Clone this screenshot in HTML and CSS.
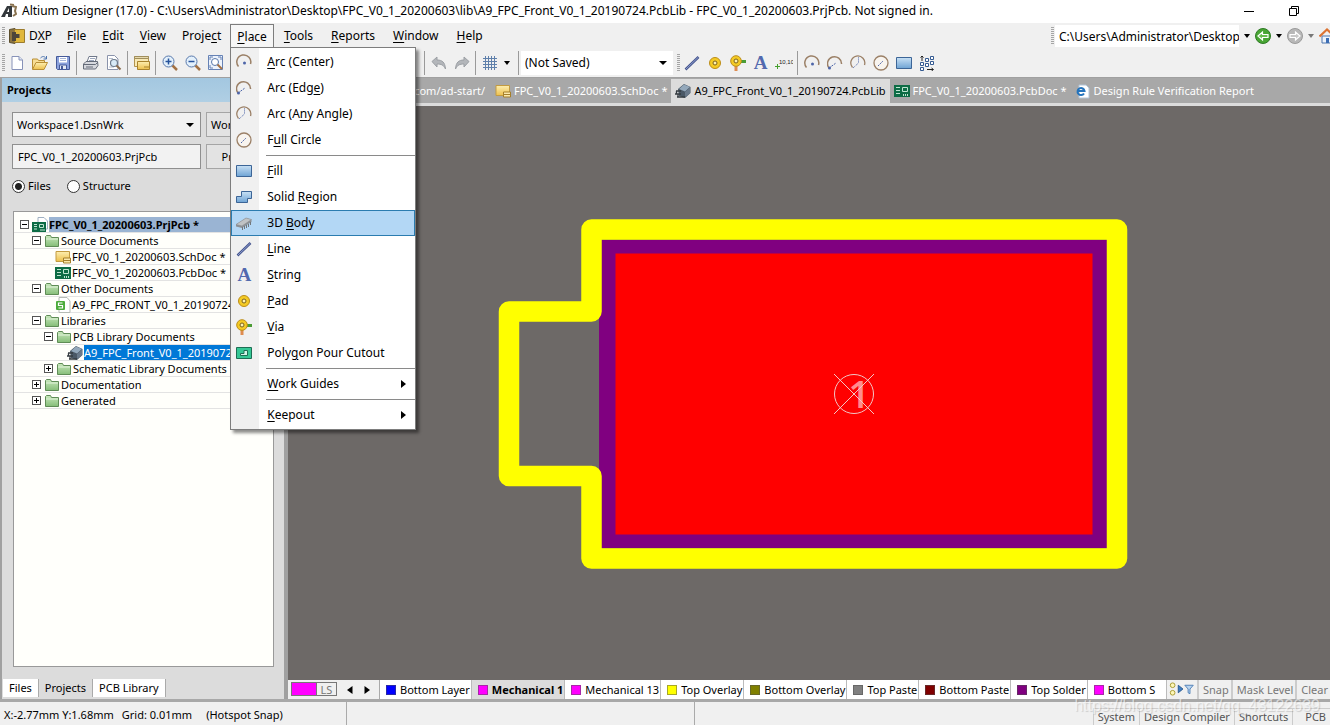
FILE: index.html
```
<!doctype html>
<html lang="en">
<head>
<meta charset="utf-8">
<title>Altium Designer (17.0)</title>
<link rel="stylesheet" href="styles.css">
</head>

<body>

<!-- icon set -->
<svg class="sprite" width="0" height="0">
	<defs>
		<linearGradient id="g-blue" x1="0" y1="0" x2="0" y2="1"><stop offset="0" stop-color="#c9e1f5"/><stop offset="1" stop-color="#6ea3d4"/></linearGradient>
		<linearGradient id="g-yellow" x1="0" y1="0" x2="0" y2="1"><stop offset="0" stop-color="#fdeeb0"/><stop offset="1" stop-color="#edc04c"/></linearGradient>
		<linearGradient id="g-green" x1="0" y1="0" x2="0" y2="1"><stop offset="0" stop-color="#c9e8bd"/><stop offset="1" stop-color="#85bd78"/></linearGradient>
	</defs>
	<symbol id="i-logo" viewBox="0 0 16 16"><path d="M0 14L6 3h5v11H7v-3H5l-1 3z" fill="#33383c"/><path d="M6 9l2-4v4z" fill="#fff"/><path d="M11 3l4 1-1 4 1 3-3 2M9 1.500l4 .5" stroke="#8a7350" stroke-width="2" fill="none"/></symbol>
	<symbol id="i-dxp" viewBox="0 0 16 16"><path d="M.5 1.500L6 .5v15l-5.500-1z" fill="#8c7440" stroke="#5b4e2d"/><path d="M5.500 1.500h10v13h-10z" fill="#e0b73c" stroke="#9c7c2d"/><path d="M3 4h4v2h3.500v4H7v3H3z" fill="#4d463a"/></symbol>
	<symbol id="i-new" viewBox="0 0 16 16"><path d="M3 1.500h7l3.500 3.500v9.500h-10.500z" fill="#fff" stroke="#8792b8"/><path d="M10 1.500v3.500h3.500" fill="#dfe6f5" stroke="#8792b8"/></symbol>
	<symbol id="i-open" viewBox="0 0 16 16"><path d="M.5 14V4h5l1 1.500h6V8" fill="#f7dd94" stroke="#b98f37"/><path d="M.5 14.500L4 7.500h11.500L12 14.500z" fill="url(#g-yellow)" stroke="#b98f37"/><path d="M8.500 3c2-2 4-2 5.500.5M14.500 1v3h-3" fill="none" stroke="#4b72ad"/></symbol>
	<symbol id="i-save" viewBox="0 0 16 16"><path d="M1.500 1.500h13v13h-12l-1-1z" fill="#8ba1dc" stroke="#455a99"/><path d="M4 2h8v5.500H4z" fill="#fff"/><path d="M5 3.500h6M5 5.500h6" stroke="#a5b4d8"/><path d="M4.500 10h7v4.500h-7z" fill="#e6eaf5" stroke="#455a99"/><path d="M6 11h2v3H6z" fill="#455a99"/></symbol>
	<symbol id="i-print" viewBox="0 0 16 16"><path d="M4 7L6 1.500h8L12 7z" fill="#fff" stroke="#70788a"/><path d="M7 3.500h5M6 5.500h5" stroke="#9ba6bd"/><path d="M.5 9L3 6.500h11.500l.500 4-2.500 3.500H.500z" fill="#d6d8de" stroke="#646b78"/><path d="M1 9.500h11.500L15 7M3 12h7" fill="none" stroke="#646b78"/></symbol>
	<symbol id="i-preview" viewBox="0 0 16 16"><path d="M1.500.5h7L12 4v10.500H1.500z" fill="#fff" stroke="#8a93ab"/><path d="M3 12h5M3 3.500h4" stroke="#b4bccc"/><circle cx="8" cy="8" r="3.500" fill="#d8eaf7" stroke="#6e7c8e" stroke-width="1.200"/><path d="M10.500 10.500l4 4" stroke="#8b6d4e" stroke-width="2"/></symbol>
	<symbol id="i-board" viewBox="0 0 16 16"><path d="M.5 1.500h14v10H.500z" fill="#f8e9b4" stroke="#b2934d"/><path d="M.5 1.500h14v2H.500z" fill="#e6d9ae" stroke="#a08e5c"/><path d="M3.500 6.500h12v8h-12z" fill="url(#g-yellow)" stroke="#a9832c"/><path d="M10 12h5" stroke="#a9832c"/></symbol>
	<symbol id="i-zin" viewBox="0 0 16 16"><path d="M10 10l5 5" stroke="#a37245" stroke-width="2.500"/><circle cx="6.500" cy="6.500" r="5.500" fill="#e3f0fb" stroke="#5878ab"/><path d="M3.500 6.500h6M6.500 3.500v6" stroke="#26539c" stroke-width="1.500"/></symbol>
	<symbol id="i-zout" viewBox="0 0 16 16"><path d="M10 10l5 5" stroke="#a37245" stroke-width="2.500"/><circle cx="6.500" cy="6.500" r="5.500" fill="#e3f0fb" stroke="#5878ab"/><path d="M3.500 6.500h6" stroke="#26539c" stroke-width="1.500"/></symbol>
	<symbol id="i-zfit" viewBox="0 0 16 16"><path d="M.5.5h14v14H.500z" fill="#edf3fc" stroke="#6682b5"/><path d="M2 5V2h3M10 2h3v3M2 10v3h3" stroke="#6682b5" fill="none"/><circle cx="7" cy="7" r="3.500" fill="#fff" stroke="#5878ab"/><path d="M9.500 9.500l4.500 4.500" stroke="#a37245" stroke-width="2"/></symbol>
	<symbol id="i-undo" viewBox="0 0 16 16"><path d="M1 6.500L6 2v3c5 0 8 2 8.500 9-2-4-4-5-8.500-5v3z" fill="#b3b6ba" stroke="#9b9fa4"/></symbol>
	<symbol id="i-redo" viewBox="0 0 16 16"><path d="M15 6.500L10 2v3c-5 0-8 2-8.500 9 2-4 4-5 8.500-5v3z" fill="#b3b6ba" stroke="#9b9fa4"/></symbol>
	<symbol id="i-grid" viewBox="0 0 16 16"><path d="M3.500 1v14M6.500 1v14M9.500 1v14M12.500 1v14M1 3.500h14M1 6.500h14M1 9.500h14M1 12.500h14" stroke="#5f80ab"/></symbol>
	<symbol id="i-line" viewBox="0 0 16 16"><path d="M1.500 14.500L14.500 2" stroke="#44558f" stroke-width="2.500"/><path d="M2 14L14 2.500" stroke="#8f9dcc"/></symbol>
	<symbol id="i-pad" viewBox="0 0 16 16"><circle cx="8" cy="8" r="5.500" fill="#f4ca24" stroke="#bc8d18"/><circle cx="8" cy="8" r="2" fill="#fff3b0" stroke="#7b611c"/></symbol>
	<symbol id="i-via" viewBox="0 0 16 16"><path d="M10 5h6v3h-6z" fill="#4b9c35"/><path d="M4.500 10h3v6h-3z" fill="#df8c50"/><circle cx="6" cy="6" r="5.300" fill="#f4ca24" stroke="#bc8d18"/><circle cx="6" cy="6" r="2" fill="#fff3b0" stroke="#7b611c"/></symbol>
	<symbol id="i-arcc" viewBox="0 0 16 16"><path d="M2.500 12.500A7 7 0 1 1 14.500 10" fill="none" stroke="#9b8067" stroke-width="1.500"/><circle cx="8.500" cy="9" r="1.500" fill="#4d65a8"/></symbol>
	<symbol id="i-arce" viewBox="0 0 16 16"><path d="M2 13A7 7 0 1 1 14.500 9" fill="none" stroke="#9b8067" stroke-width="1.500"/><path d="M2 13l7-5" stroke="#4d65a8" stroke-dasharray="2 1"/><circle cx="2.500" cy="13" r="1.500" fill="#4d65a8"/></symbol>
	<symbol id="i-arca" viewBox="0 0 16 16"><path d="M2.500 12.500A7 7 0 1 1 14.500 10" fill="none" stroke="#9b8067" stroke-width="1.300"/><path d="M3 13l5.500-5V2" fill="none" stroke="#4d65a8" stroke-dasharray="1 1"/></symbol>
	<symbol id="i-circle" viewBox="0 0 16 16"><circle cx="8" cy="8" r="7" fill="#f8f4ef" stroke="#9b8067" stroke-width="1.300"/><path d="M5 11l5-5" stroke="#4d65a8" stroke-dasharray="2 1"/></symbol>
	<symbol id="i-fill" viewBox="0 0 16 16"><path d="M.5 2.500h15v11H.500z" fill="url(#g-blue)" stroke="#3c6597"/></symbol>
	<symbol id="i-region" viewBox="0 0 16 16"><path d="M5.500 2.500h10v7h-4v4H.500v-6h5z" fill="url(#g-blue)" stroke="#3c6597"/></symbol>
	<symbol id="i-body" viewBox="0 0 16 16"><path d="M0 9.500L10 3l5.500 1.500v2.500L6 13 0 11.500z" fill="#8c9196"/><path d="M0 9.500L10 3l5.500 1.500L6 11z" fill="#c0c3c5" stroke="#85898d" stroke-width=".5"/><path d="M6.500 12v3M8.500 11v3M10.500 10v3M12.500 9v3M14.500 7v3" stroke="#72777b"/></symbol>
	<symbol id="i-cutout" viewBox="0 0 16 16"><path d="M.5 2.500h15v11H.500z" fill="#35c795" stroke="#1d6e54"/><path d="M8 5.500h3.500v5h-7v-2H8z" fill="#d4f5e8" stroke="#1d6e54"/></symbol>
	<symbol id="i-array" viewBox="0 0 16 16"><path d="M1.500 7.500h3v3h-3zM1.500 12.500h3v3h-3zM6.500 3.500h3v3h-3zM6.500 8.500h3v3h-3zM11.500 1.500h3v3h-3zM11.500 6.500h3v3h-3z" fill="#fff" stroke="#345a91"/><path d="M3 6V1M1.500 2.500L3 1l1.500 1.500M8 14.500h6M12.500 13l2 1.500-2 1.500" fill="none" stroke="#222"/></symbol>
	<symbol id="i-sch" viewBox="0 0 16 16"><path d="M1 2.500h13.500v10H1z" fill="url(#g-yellow)" stroke="#c39b41"/><path d="M8.500 9h7v5h-7z" fill="#fbe9ab" stroke="#a57f2b"/><path d="M9 11.500h6" stroke="#a57f2b"/></symbol>
	<symbol id="i-pcb" viewBox="0 0 16 16"><path d="M0 2h16v12H0z" fill="#0d6c45"/><path d="M2 4.500h4M2 7.500h4M2 10.500h4" stroke="#bfe5d1"/><path d="M8.500 4.500h5v4h-5z" fill="none" stroke="#bfe5d1"/><path d="M9 12h6" stroke="#bfe5d1" stroke-width="2" stroke-dasharray="1 1"/></symbol>
	<symbol id="i-prj" viewBox="0 0 16 16"><path d="M6 .5h6L15.500 4v8H6z" fill="#fff" stroke="#9fb0c2"/><path d="M0 5h14v10H0z" fill="#0d6c45"/><path d="M2 7.500h3M2 9.500h3M2 12h3" stroke="#bfe5d1"/><path d="M7.500 7.500h4v3h-4zM8 13h5" fill="none" stroke="#bfe5d1"/></symbol>
	<symbol id="i-lib" viewBox="0 0 16 16"><path d="M3 6l6-5 6.500 3v6L10 15l-6-2z" fill="#4a5866"/><path d="M4 6l5-4.500L15 4l-5 4.500z" fill="#93a8bb"/><path d="M10 9v5l5-3.500v-6z" fill="#69798a"/><path d="M1 8h5M0 11h6M2 14h8M1.500 8v3M3 11v3" stroke="#363c42" stroke-width="1.300"/></symbol>
	<symbol id="i-ie" viewBox="0 0 16 16"><path d="M4 2h7l3 3v10H4z" fill="#fff" stroke="#b1c4d8"/><path d="M9 10.500A3.500 3.500 0 1 1 9.500 8H3" fill="none" stroke="#2474bd" stroke-width="2"/></symbol>
	<symbol id="i-folder" viewBox="0 0 16 16"><path d="M1.500 13.500v-10l1-1h4l1 2h7v9z" fill="url(#g-green)" stroke="#5f8c56"/><path d="M2 6h12" stroke="#e0f2d9"/></symbol>
	<symbol id="i-sheet" viewBox="0 0 16 16"><path d="M4 .5h8L15 4v11.500H4z" fill="#fff" stroke="#b5bbb5"/><rect x="1" y="4" width="9" height="9" rx="1" fill="#4cab3c"/><path d="M7.500 6h-4v2.500h4V11h-4" fill="none" stroke="#fff" stroke-width="1.200"/></symbol>
	<symbol id="i-back" viewBox="0 0 16 16"><circle cx="8" cy="8" r="7.500" fill="#48a534" stroke="#2f7a25"/><path d="M3 8l4.500-4v2.500H13v3H7.500V12z" fill="#68bd50" stroke="#fff" stroke-width="1.200"/></symbol>
	<symbol id="i-fwd" viewBox="0 0 16 16"><circle cx="8" cy="8" r="7.500" fill="#b8b8b8" stroke="#9a9a9a"/><path d="M13 8L8.500 4v2.500H3v3h5.500V12z" fill="#c8c8c8" stroke="#fff" stroke-width="1.200"/></symbol>
	<symbol id="i-home" viewBox="0 0 16 16"><path d="M3 8h10v7H3z" fill="#eef3fa" stroke="#4f76ad"/><path d="M.5 8.500L8 1.500l7.500 7" fill="none" stroke="#dc7332" stroke-width="2.200"/><path d="M7 10h3v5H7z" fill="#3b6db4"/></symbol>
	<symbol id="i-filter" viewBox="0 0 32 16"><circle cx="6" cy="4" r="2.500" fill="#fdf6b8" stroke="#a79a2e"/><circle cx="6" cy="12" r="2.500" fill="#fdf6b8" stroke="#a79a2e"/><path d="M12 4l5 4-5 4z" fill="#3f7fc4" stroke="#27588f"/><path d="M19 4h9l-3.500 4v5l-2-1V8z" fill="#b9d5f1" stroke="#4f7fb5"/></symbol>
</svg>

<div class="app">

<header class="title-bar">
	<svg class="icon"><use href="#i-logo"/></svg>
	<h1>Altium Designer (17.0) - C:\Users\Administrator\Desktop\FPC_V0_1_20200603\lib\A9_FPC_Front_V0_1_20190724.PcbLib - FPC_V0_1_20200603.PrjPcb. Not signed in.</h1>
	<div class="win-buttons">
		<button aria-label="Minimize"><svg width="12" height="12"><path d="M1 6.500h10" stroke="#000"/></svg></button>
		<button aria-label="Restore"><svg width="12" height="12" fill="none" stroke="#000"><path d="M1.500 3.500h7v7h-7zM3.500 3V1.500h7v7H9"/></svg></button>
	</div>
</header>

<nav class="menu-bar">
	<i class="grip"></i>
	<button class="menu-item dxp"><svg class="icon"><use href="#i-dxp"/></svg>D<u>X</u>P</button>
	<button class="menu-item"><u>F</u>ile</button>
	<button class="menu-item"><u>E</u>dit</button>
	<button class="menu-item"><u>V</u>iew</button>
	<button class="menu-item">Proje<u>c</u>t</button>
	<div class="menu-open">
		<button class="menu-item active"><u>P</u>lace</button>
		<div class="dropdown">
			<button><svg class="icon"><use href="#i-arcc"/></svg><span><u>A</u>rc (Center)</span></button>
			<button><svg class="icon"><use href="#i-arce"/></svg><span>Arc (Edg<u>e</u>)</span></button>
			<button><svg class="icon"><use href="#i-arca"/></svg><span>Arc (A<u>n</u>y Angle)</span></button>
			<button><svg class="icon"><use href="#i-circle"/></svg><span>F<u>u</u>ll Circle</span></button>
			<hr>
			<button><svg class="icon"><use href="#i-fill"/></svg><span><u>F</u>ill</span></button>
			<button><svg class="icon"><use href="#i-region"/></svg><span>Solid <u>R</u>egion</span></button>
			<button class="hover"><svg class="icon"><use href="#i-body"/></svg><span>3D <u>B</u>ody</span></button>
			<button><svg class="icon"><use href="#i-line"/></svg><span><u>L</u>ine</span></button>
			<button><b class="letter">A</b><span><u>S</u>tring</span></button>
			<button><svg class="icon"><use href="#i-pad"/></svg><span><u>P</u>ad</span></button>
			<button><svg class="icon"><use href="#i-via"/></svg><span><u>V</u>ia</span></button>
			<button><svg class="icon"><use href="#i-cutout"/></svg><span>Poly<u>g</u>on Pour Cutout</span></button>
			<hr>
			<button class="sub"><span><u>W</u>ork Guides</span></button>
			<hr>
			<button class="sub"><span><u>K</u>eepout</span></button>
		</div>
	</div>
	<button class="menu-item"><u>T</u>ools</button>
	<button class="menu-item"><u>R</u>eports</button>
	<button class="menu-item"><u>W</u>indow</button>
	<button class="menu-item"><u>H</u>elp</button>
	<div class="path-bar">
		<i class="grip"></i>
		<input type="text" aria-label="Address" value="C:\Users\Administrator\Desktop">
		<i class="arrow"></i>
		<button aria-label="Back"><svg class="icon"><use href="#i-back"/></svg></button>
		<i class="arrow"></i>
		<button aria-label="Forward"><svg class="icon"><use href="#i-fwd"/></svg></button>
		<i class="arrow dim"></i>
		<button aria-label="Home"><svg class="icon"><use href="#i-home"/></svg></button>
	</div>
</nav>

<div class="tool-bar">
	<div class="tools tools-main">
		<i class="grip"></i>
		<button aria-label="New"><svg class="icon"><use href="#i-new"/></svg></button>
		<button aria-label="Open"><svg class="icon"><use href="#i-open"/></svg></button>
		<button aria-label="Save"><svg class="icon"><use href="#i-save"/></svg></button>
		<i class="sep"></i>
		<button aria-label="Print"><svg class="icon"><use href="#i-print"/></svg></button>
		<button aria-label="Preview"><svg class="icon"><use href="#i-preview"/></svg></button>
		<i class="sep"></i>
		<button aria-label="Board view"><svg class="icon"><use href="#i-board"/></svg></button>
		<i class="sep"></i>
		<button aria-label="Zoom in"><svg class="icon"><use href="#i-zin"/></svg></button>
		<button aria-label="Zoom out"><svg class="icon"><use href="#i-zout"/></svg></button>
		<button aria-label="Fit"><svg class="icon"><use href="#i-zfit"/></svg></button>
	</div>
	<div class="tools">
		<i class="sep"></i>
		<button aria-label="Undo"><svg class="icon"><use href="#i-undo"/></svg></button>
		<button aria-label="Redo"><svg class="icon"><use href="#i-redo"/></svg></button>
		<i class="sep"></i>
		<button aria-label="Grid"><svg class="icon"><use href="#i-grid"/></svg></button>
		<i class="arrow"></i>
		<i class="sep"></i>
		<label class="combo view-combo"><select aria-label="Saved view"><option>(Not Saved)</option></select></label>
		<i class="grip"></i>
		<button aria-label="Place line"><svg class="icon"><use href="#i-line"/></svg></button>
		<button aria-label="Place pad"><svg class="icon"><use href="#i-pad"/></svg></button>
		<button aria-label="Place via"><svg class="icon"><use href="#i-via"/></svg></button>
		<button aria-label="Place string"><b class="letter">A</b></button>
		<button aria-label="Place coordinate"><svg width="18" height="16"><text class="coord" x="4" y="9">10,10</text><path d="M0 11.500h5M2.500 9v5" stroke="#46a02c"/></svg></button>
		<i class="sep"></i>
		<button aria-label="Arc by center"><svg class="icon"><use href="#i-arcc"/></svg></button>
		<button aria-label="Arc by edge"><svg class="icon"><use href="#i-arce"/></svg></button>
		<button aria-label="Arc any angle"><svg class="icon"><use href="#i-arca"/></svg></button>
		<button aria-label="Full circle"><svg class="icon"><use href="#i-circle"/></svg></button>
		<button aria-label="Place fill"><svg class="icon"><use href="#i-fill"/></svg></button>
		<button aria-label="Paste array"><svg class="icon"><use href="#i-array"/></svg></button>
	</div>
</div>

<div class="work">
	<aside class="panel">
		<h2>Projects</h2>
		<div class="panel-form">
			<div class="row">
				<label class="combo"><select aria-label="Workspace"><option>Workspace1.DsnWrk</option></select></label>
				<button>Workspace</button>
			</div>
			<div class="row">
				<input type="text" aria-label="Project" value="FPC_V0_1_20200603.PrjPcb">
				<button>Project</button>
			</div>
			<div class="radios">
				<label><input type="radio" name="view" checked>Files</label>
				<label><input type="radio" name="view">Structure</label>
			</div>
		</div>
		<ul class="tree">
			<li class="project-row"><i class="box minus"></i><svg class="icon"><use href="#i-prj"/></svg><span>FPC_V0_1_20200603.PrjPcb *</span></li>
			<li class="l1"><i class="box minus"></i><svg class="icon"><use href="#i-folder"/></svg><span>Source Documents</span></li>
			<li class="l2"><svg class="icon"><use href="#i-sch"/></svg><span>FPC_V0_1_20200603.SchDoc *</span></li>
			<li class="l2"><svg class="icon"><use href="#i-pcb"/></svg><span>FPC_V0_1_20200603.PcbDoc *</span></li>
			<li class="l1"><i class="box minus"></i><svg class="icon"><use href="#i-folder"/></svg><span>Other Documents</span></li>
			<li class="l2"><svg class="icon"><use href="#i-sheet"/></svg><span>A9_FPC_FRONT_V0_1_20190724</span></li>
			<li class="l1"><i class="box minus"></i><svg class="icon"><use href="#i-folder"/></svg><span>Libraries</span></li>
			<li class="l2 node"><i class="box minus"></i><svg class="icon"><use href="#i-folder"/></svg><span>PCB Library Documents</span></li>
			<li class="l3 selected"><svg class="icon"><use href="#i-lib"/></svg><span>A9_FPC_Front_V0_1_20190724</span></li>
			<li class="l2 node"><i class="box plus"></i><svg class="icon"><use href="#i-folder"/></svg><span>Schematic Library Documents</span></li>
			<li class="l1"><i class="box plus"></i><svg class="icon"><use href="#i-folder"/></svg><span>Documentation</span></li>
			<li class="l1"><i class="box plus"></i><svg class="icon"><use href="#i-folder"/></svg><span>Generated</span></li>
		</ul>
		<div class="panel-tabs">
			<button>Files</button>
			<button class="active">Projects</button>
			<button>PCB Library</button>
		</div>
	</aside>

	<main class="editor">
		<div class="doc-tabs">
			<button class="start">com/ad-start/</button>
			<button><svg class="icon"><use href="#i-sch"/></svg>FPC_V0_1_20200603.SchDoc *</button>
			<button class="active"><svg class="icon"><use href="#i-lib"/></svg>A9_FPC_Front_V0_1_20190724.PcbLib</button>
			<button><svg class="icon"><use href="#i-pcb"/></svg>FPC_V0_1_20200603.PcbDoc *</button>
			<button><svg class="icon"><use href="#i-ie"/></svg>Design Rule Verification Report</button>
		</div>
		<div class="canvas">
			<!-- battery footprint: solder mask, copper pad, overlay outline -->
			<svg class="footprint" width="630" height="352" viewBox="498 218 630 352">
				<path d="M599 240h508v308H599z" fill="#800080"/>
				<path d="M615.500 253.500h477v281h-477z" fill="#f00"/>
				<path d="M591.500 229.500H1117v329H591.500V476H509V311.500h82.500z" fill="none" stroke="#ff0" stroke-width="20.500" stroke-linejoin="round"/>
				<text class="pad-name" x="859" y="408" text-anchor="middle">1</text>
				<g fill="none" stroke="#f2c6c6"><circle cx="854" cy="394" r="19.500"/><path d="M834 374l40 40M874 374l-40 40"/></g>
			</svg>
		</div>
		<div class="layer-bar">
			<div class="layer-set"><i></i><button>LS</button></div>
			<button class="step" aria-label="Previous layer"><svg width="6" height="8"><path d="M5.500 0v8L0 4z"/></svg></button>
			<button class="step" aria-label="Next layer"><svg width="6" height="8"><path d="M.5 0v8L6 4z"/></svg></button>
			<div class="layers">
				<button><i class="sw blue"></i>Bottom Layer</button>
				<button class="active"><i class="sw magenta"></i>Mechanical 1</button>
				<button><i class="sw magenta"></i>Mechanical 13</button>
				<button><i class="sw yellow"></i>Top Overlay</button>
				<button><i class="sw olive"></i>Bottom Overlay</button>
				<button><i class="sw grey"></i>Top Paste</button>
				<button><i class="sw maroon"></i>Bottom Paste</button>
				<button><i class="sw purple"></i>Top Solder</button>
				<button><i class="sw magenta"></i>Bottom S</button>
			</div>
			<div class="mask-tools">
				<svg class="filter-icon"><use href="#i-filter"/></svg>
				<button>Snap</button>
				<button>Mask Level</button>
				<button>Clear</button>
			</div>
		</div>
	</main>
</div>

<footer class="status-bar">
	<div class="status-left"><span>X:-2.77mm Y:1.68mm</span><span>Grid: 0.01mm</span><span>(Hotspot Snap)</span></div>
	<div class="status-mid"></div>
	<div class="status-right">
		<button>System</button>
		<button>Design Compiler</button>
		<button>Shortcuts</button>
		<button>PCB</button>
	</div>
</footer>

<p class="watermark">https://blog.csdn.net/qq_43122639</p>
</div>

</body>
</html>
```
FILE: styles.css
```
* { padding: 0; margin: 0; box-sizing: border-box; }
li { list-style: none; }
html, body { height: 100%; }

body {
	overflow: hidden;
	background: #f0f0f0;
	color: #000;
	font: 12px/16px "Noto Sans", "Open Sans", sans-serif;
}
button, input, select {
	font: inherit;
	color: inherit;
	border: none;
	background: none;
	white-space: nowrap;
}
h1, h2 { font-size: inherit; font-weight: normal; }
u { text-underline-offset: 2px; }
.sprite { position: absolute; }
.icon { width: 16px; height: 16px; flex: none; display: block; }
.letter {
	width: 16px;
	text-align: center;
	font: bold 19px/16px "Liberation Serif", serif;
	color: #5269ae;
}
.coord { font: 6px "Liberation Sans", sans-serif; fill: #222; }

.app {
	display: flex;
	flex-direction: column;
	height: 100%;
	position: relative;
}

/* shared bits */
.grip {
	flex: none;
	width: 3px;
	height: 18px;
	background: repeating-linear-gradient(#a5a5a5 0 1px, #f0f0f0 1px 2px);
}
.sep {
	flex: none;
	width: 1px;
	height: 24px;
	margin: 0 2px;
	background: #9a9a9a;
}
.arrow {
	flex: none;
	border: 3px solid transparent;
	border-top: 4px solid #000;
	border-bottom: 0;
}
.arrow.dim { border-top-color: #777; }
.combo { position: relative; display: block; }
.combo select {
	appearance: none;
	width: 100%;
	height: 100%;
	padding: 0 20px 0 4px;
}
.combo:after {
	content: "";
	position: absolute;
	right: 6px;
	top: 50%;
	margin-top: -2px;
	border: 4px solid transparent;
	border-top: 4px solid #000;
	border-bottom: 0;
	pointer-events: none;
}

/* title */
.title-bar {
	display: flex;
	align-items: center;
	height: 23px;
	padding: 0 0 1px 1px;
	background: #fff;
}
.title-bar h1 { margin-left: 5px; flex: 1; white-space: nowrap; }
.win-buttons { display: flex; padding-right: 30px; }
.win-buttons button { width: 12px; height: 12px; margin-left: 33px; }
.win-buttons svg { display: block; }

/* menu */
.menu-bar {
	display: flex;
	align-items: center;
	height: 26px;
	padding-left: 2px;
}
.menu-item { height: 24px; padding: 0 7px; margin: 0 1px; }
.menu-item.dxp { display: flex; align-items: center; padding: 0 6px 0 3px; }
.dxp .icon { margin-right: 4px; }
.menu-open { position: relative; }
.menu-open ~ .menu-item { margin: 0 2px; }
.menu-item.active {
	border: 1px solid #7d7d7d;
	border-bottom: none;
	padding: 0 6px;
	background: #f6f6f6;
}
.dropdown {
	position: absolute;
	left: 1px;
	top: 23px;
	z-index: 5;
	width: 186px;
	padding: 1px 0 1px;
	border: 1px solid #7d7d7d;
	background: linear-gradient(90deg, #f0f0f0 28px, #fff 28px);
	box-shadow: 3px 3px 3px rgba(0,0,0,.45);
}
.dropdown button {
	display: flex;
	align-items: center;
	width: 100%;
	height: 26px;
	padding-left: 5px;
	position: relative;
	text-align: left;
}
.dropdown button span { margin-left: 15px; }
.dropdown .sub span { margin-left: 31px; }
.dropdown .hover {
	background: #b3d7f5;
	outline: 1px solid #2b7cb0;
	outline-offset: -1px;
}
.dropdown .sub:after {
	content: "";
	position: absolute;
	right: 9px;
	border: 4px solid transparent;
	border-left: 5px solid #000;
	border-right: 0;
}
.dropdown hr { border: none; height: 1px; background: #8a8a8a; margin: 2px 0 2px 35px; }

.path-bar { display: flex; align-items: center; margin-left: auto; }
.path-bar input { width: 184px; height: 22px; padding-left: 4px; margin-left: 1px; background: #fff; }
.path-bar .arrow, .path-bar button { margin-left: 5px; }
.path-bar button:last-child { margin-right: -5px; }

/* toolbar */
.tool-bar { display: flex; align-items: center; height: 28px; }
.tools { display: flex; align-items: center; }
.tools-main { flex: none; width: 422px; padding-left: 2px; }
.tools button { width: 23px; height: 24px; flex: none; display: flex; align-items: center; justify-content: center; }
.tools .arrow { margin: 0 6px 0 3px; }
.view-combo { width: 152px; height: 24px; background: #fff; margin-right: 4px; }

/* work area */
.work {
	flex: 1;
	display: flex;
	min-height: 0;
	border-bottom: 3px solid #a8a8a8;
	border-top: 1px solid #a0a0a0;
	font-size: 11px;
}
.panel {
	flex: none;
	width: 288px;
	display: flex;
	flex-direction: column;
	background: #dcdcdc;
	border-left: 2px solid #a0a0a0;
	border-right: 4px solid #a0a0a0;
}
.panel h2 {
	height: 24px;
	padding: 0 5px;
	line-height: 24px;
	font-weight: bold;
	background: linear-gradient(#a3c7e0, #b0cfe4);
}
.panel-form { padding: 10px 11px 0 10px; }
.row { display: flex; height: 25px; margin-bottom: 7px; }
.row .combo, .row input { width: 189px; flex: none; border: 1px solid #8f8f8f; background: #f2f2f2; }
.row input { padding-left: 5px; }
.row button { flex: 1; margin-left: 5px; border: 1px solid #a5a5a5; background: #e3e3e3; }
.radios { display: flex; height: 20px; align-items: center; margin-top: 5px; }
.radios label { display: flex; align-items: center; margin-right: 16px; }
.radios input {
	appearance: none;
	width: 13px;
	height: 13px;
	margin-right: 3px;
	border: 1px solid #333;
	border-radius: 50%;
	background: #fff;
}
.radios input:checked { background: radial-gradient(#222 0 3px, #fff 4px); }

.tree {
	flex: 1;
	margin: 15px 10px 0 11px;
	padding: 5px 0;
	background: #fffffb;
	border: 1px solid #999;
	overflow: hidden;
}
.tree li {
	display: flex;
	align-items: center;
	height: 16px;
	padding-left: 6px;
	border-bottom: 1px solid #e3e3e3;
	white-space: nowrap;
}
.tree .icon { margin: 0 1px 0 3px; }
.tree .l1 { padding-left: 18px; }
.tree .l2 { padding-left: 38px; }
.tree .l2.node { padding-left: 30px; }
.tree .l3 { padding-left: 50px; }
.tree span { line-height: 15px; flex: 1; }
.project-row span { background: #9ab4d3; font-weight: bold; }
.selected span { background: #0078d7; color: #fff; }
.box {
	width: 9px;
	height: 9px;
	border: 1px solid #555;
	background: linear-gradient(#000, #000) center / 5px 1px no-repeat #fff;
}
.box.plus { background: linear-gradient(#000, #000) center / 5px 1px no-repeat, linear-gradient(#000, #000) center / 1px 5px no-repeat #fff; }

.panel-tabs { display: flex; height: 18px; margin: 12px 0 2px 1px; }
.panel-tabs button { padding: 0 6px; background: #fff; border-right: 1px solid #aaa; }
.panel-tabs .active { background: #dcdcdc; }

/* documents */
.editor { flex: 1; min-width: 0; display: flex; flex-direction: column; }
.doc-tabs {
	display: flex;
	height: 28px;
	padding-top: 1px;
	background: #a8a8a8;
	border-bottom: 3px solid #dcdcdc;
	color: #fff;
}
.doc-tabs button { display: flex; align-items: center; padding: 0 4px; }
.doc-tabs .icon { margin-right: 3px; }
.doc-tabs .start { flex: none; width: 203px; justify-content: flex-end; padding-right: 6px; }
.doc-tabs .active { background: #dcdcdc; color: #000; }
.canvas { flex: 1; position: relative; overflow: hidden; background: #6d6967; }
.footprint { position: absolute; left: 210px; top: 112px; }
.pad-name { font: 600 38px "Open Sans", sans-serif; fill: #ff8c8c; }

.layer-bar { display: flex; height: 19px; background: #f0f0f0; overflow: hidden; }
.layer-set { display: flex; width: 46px; height: 14px; margin: 2px 4px 0 3px; border: 1px solid #777; flex: none; }
.layer-set i { width: 25px; background: #f0f; border-right: 1px solid #777; }
.layer-set button { flex: 1; line-height: 14px; color: #777; }
.step { width: 17px; flex: none; }
.layers { display: flex; flex: 1; min-width: 0; overflow: hidden; margin-left: 4px; border-left: 1px solid #aaa; }
.layers button { flex: none; display: flex; align-items: center; padding: 0 1px 0 6px; background: #fff; border-right: 1px solid #bbb; }
.layers button:last-child { flex: 1; }
.layers .active { background: #dcdcdc; font-weight: bold; }
.sw { width: 10px; height: 10px; margin-right: 4px; border: 1px solid rgba(80,80,80,.5); }
.blue { background: #00f; }
.magenta { background: #f0f; }
.yellow { background: #ff0; }
.olive { background: #808000; }
.grey { background: #808080; }
.maroon { background: #800000; }
.purple { background: #800080; }
.mask-tools { display: flex; flex: none; color: #777; }
.mask-tools button { padding: 0 2px 0 4px; border-left: 2px solid #ccc; }
.filter-icon { width: 30px; height: 16px; margin-top: 1px; }

/* status */
.status-bar { display: flex; height: 23px; font-size: 11px; }
.status-left { display: flex; width: 347px; padding: 5px 0 0 4px; border-right: 1px solid #aaa; white-space: nowrap; }
.status-left span { margin-right: 8px; }
.status-left span:last-child { margin: 0 0 0 6px; }
.status-mid { width: 348px; border-right: 1px solid #aaa; }
.status-right { display: flex; margin-left: auto; margin-top: 6px; color: #555; }
.status-right button { padding: 0 4px; border: 1px solid #ccc; border-width: 1px 0 0 1px; }
.status-right button:last-child { padding-left: 12px; }

.watermark {
	position: absolute;
	right: 10px;
	bottom: 9px;
	font: 16px/20px "Liberation Sans", sans-serif;
	color: rgba(255,255,255,.6);
	text-shadow: 1px 1px 1px rgba(0,0,0,.15);
	pointer-events: none;
}
```
